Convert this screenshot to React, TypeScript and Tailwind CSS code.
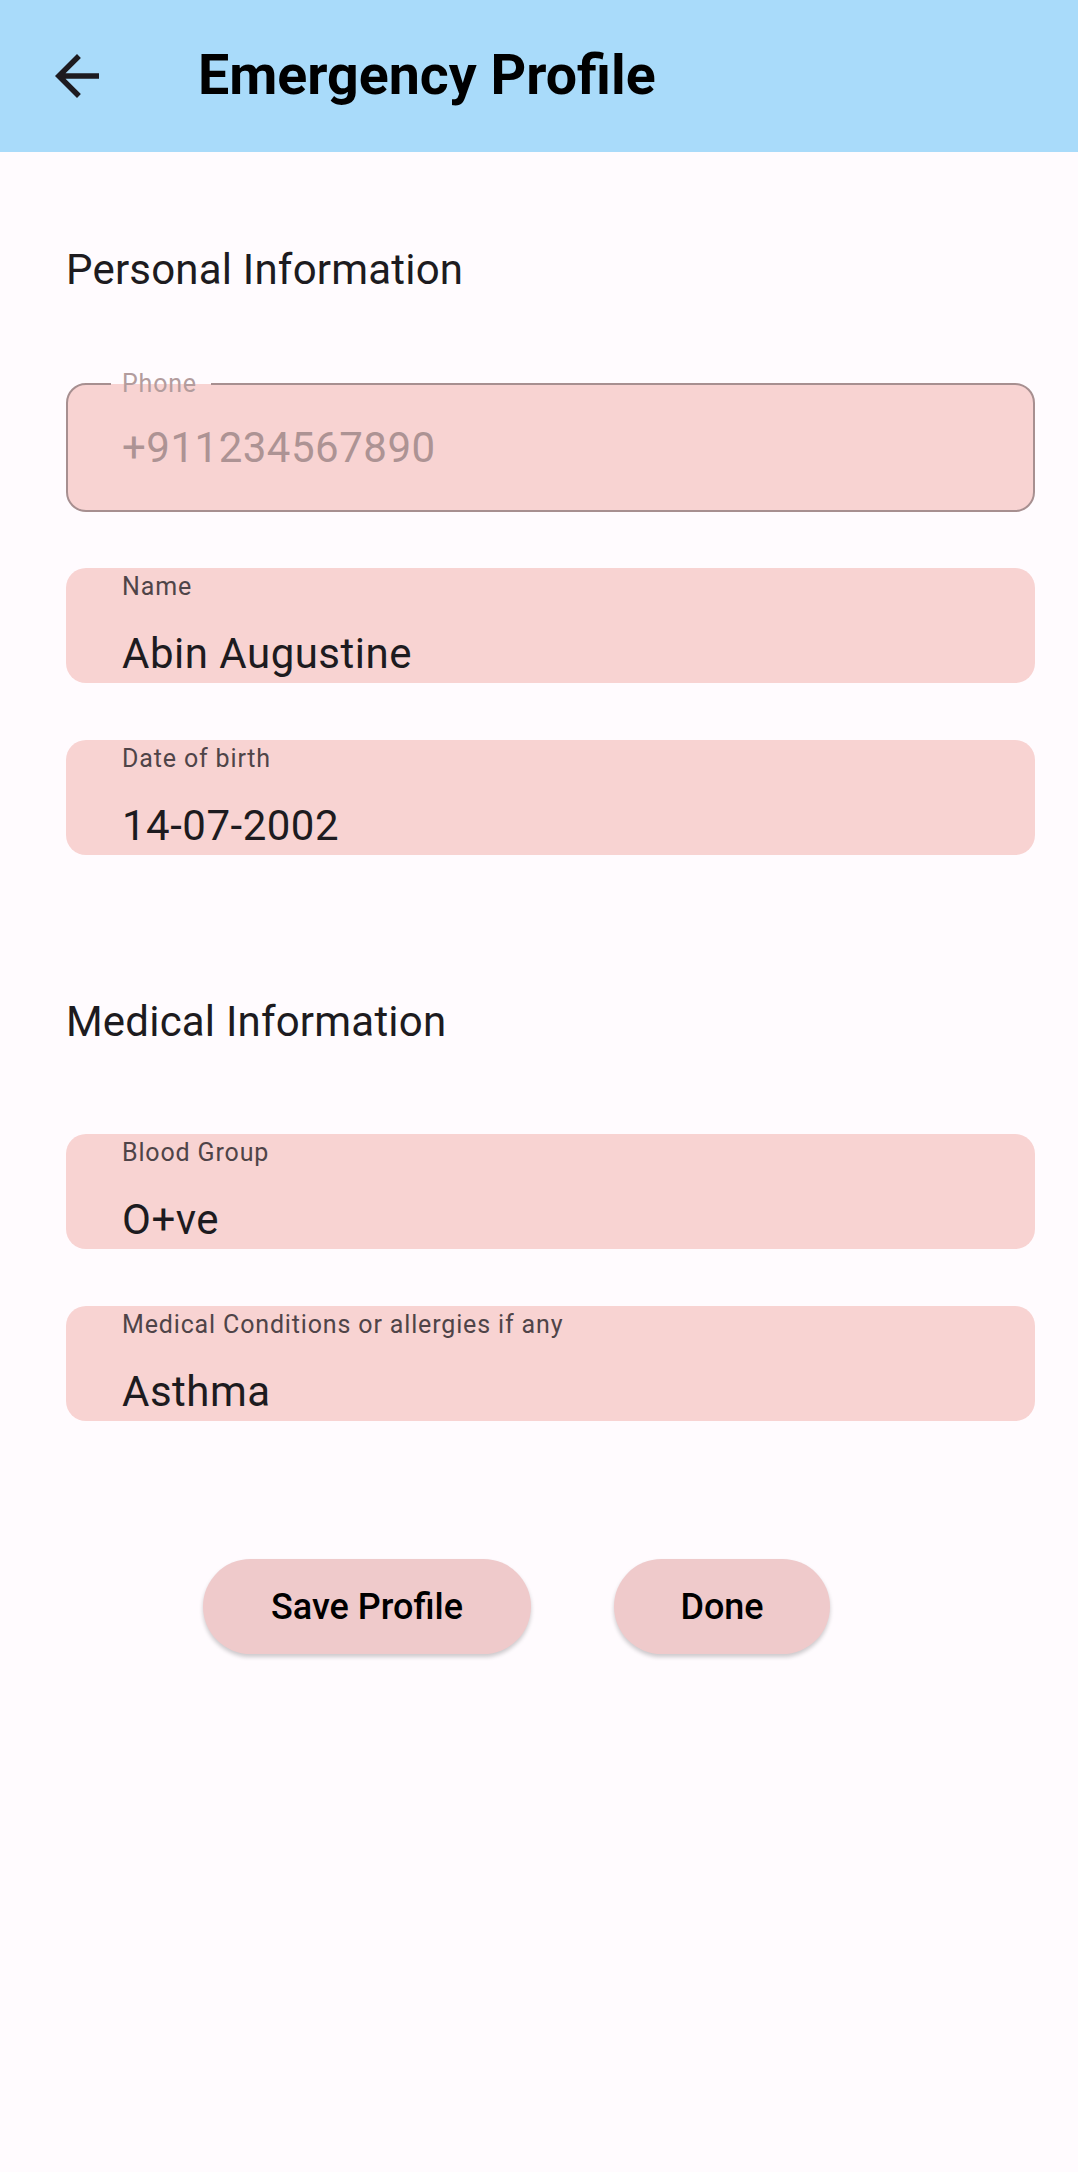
import React from 'react';

const font = { fontFamily: 'Roboto, "Noto Sans", sans-serif' };

function BackArrow() {
  return (
    <svg viewBox="0 0 24 24" className="size-[66px]" fill="#1d1b20">
      <path d="M20 11H7.83l5.59-5.59L12 4l-8 8 8 8 1.41-1.41L7.83 13H20v-2z" />
    </svg>
  );
}

function OutlinedField({ label, value }: { label: string; value: string }) {
  return (
    <div className="relative h-[129px] rounded-[20px] border-2 border-[#a78f90] bg-[#f8d3d2] flex items-center pl-[54px]">
      <span className="absolute left-[43px] top-[-16px] h-[30px] pl-[11px] pr-[14px] leading-[30px] text-[25px] tracking-[0.8px] text-[#b39c9d] bg-[linear-gradient(to_bottom,#fffbfe_50%,#f8d3d2_50%)]">
        {label}
      </span>
      <span className="text-[42px] leading-[50px] tracking-[0.5px] text-[#ad9394]">
        {value}
      </span>
    </div>
  );
}

function FilledField({ label, value }: { label: string; value: string }) {
  return (
    <div className="h-[115px] overflow-hidden rounded-[20px] bg-[#f8d3d2] flex flex-col pt-[5px] pl-[56px]">
      <span className="text-[25px] leading-[28px] tracking-[0.85px] text-[#4f4448]">
        {label}
      </span>
      <span className="mt-[28px] text-[42px] leading-[50px] tracking-[0.5px] text-[#1d1b20]">
        {value}
      </span>
    </div>
  );
}

export default function App() {
  return (
    <div className="min-h-screen bg-[#fffbfe]" style={font}>
      <header className="h-[152px] bg-[#a9dbfa] flex items-center pl-[44px]">
        <BackArrow />
        <h1 className="ml-[88px] text-[55.5px] font-bold text-black">
          Emergency Profile
        </h1>
      </header>

      <main className="pl-[66px] pr-[43px]">
        <h2 className="mt-[90px] text-[42px] leading-[56px] font-normal tracking-[0.2px] text-[#1d1b20]">
          Personal Information
        </h2>

        <div className="mt-[85px]">
          <OutlinedField label="Phone" value="+911234567890" />
        </div>
        <div className="mt-[56px] space-y-[57px]">
          <FilledField label="Name" value="Abin Augustine" />
          <FilledField label="Date of birth" value="14-07-2002" />
        </div>

        <h2 className="mt-[139px] text-[42px] leading-[56px] font-normal tracking-[0.2px] text-[#1d1b20]">
          Medical Information
        </h2>

        <div className="mt-[84px] space-y-[57px]">
          <FilledField label="Blood Group" value="O+ve" />
          <FilledField
            label="Medical Conditions or allergies if any"
            value="Asthma"
          />
        </div>
      </main>

      <div className="mt-[138px] flex gap-[83px] pl-[203px]">
        <button className="h-[95px] w-[328px] rounded-full bg-[#efcacb] text-[36px] font-medium text-black shadow-[0_3px_4px_rgba(0,0,0,0.2)]">
          Save Profile
        </button>
        <button className="h-[95px] w-[216px] rounded-full bg-[#efcacb] text-[36px] font-medium text-black shadow-[0_3px_4px_rgba(0,0,0,0.2)]">
          Done
        </button>
      </div>
    </div>
  );
}
